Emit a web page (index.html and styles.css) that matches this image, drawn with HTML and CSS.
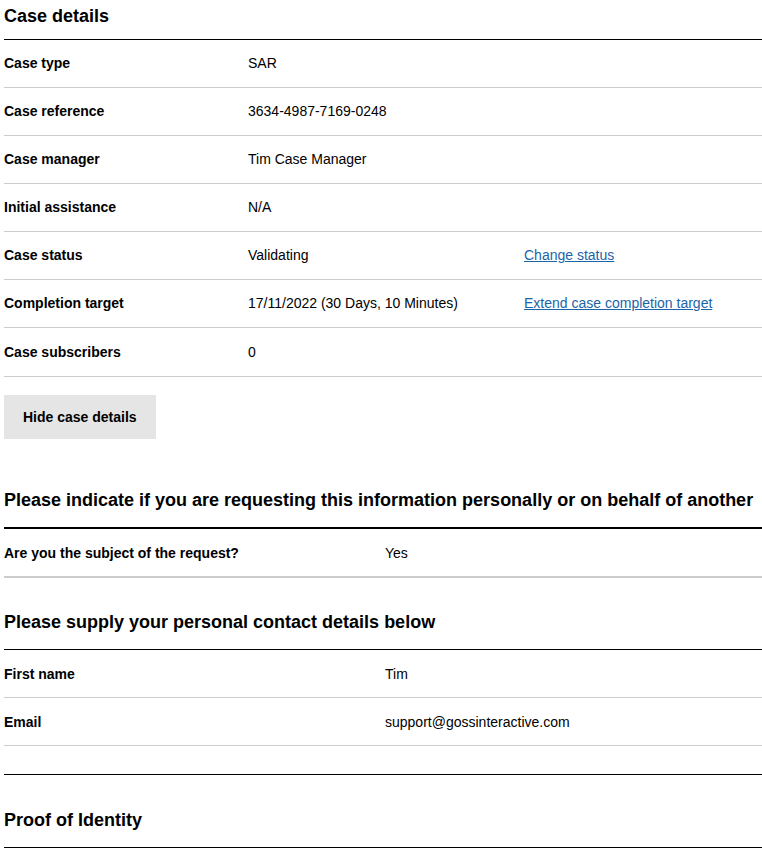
FILE: index.html
```html
<!DOCTYPE html>
<html lang="en">
<head>
<meta charset="utf-8">
<title>Case details</title>
<link rel="stylesheet" href="styles.css">
</head>
<body>
<main class="page">
  <section class="case">
    <h2 class="heading heading-first">Case details</h2>
    <div class="case-list">
      <div class="case-row"><div class="label">Case type</div><div class="value">SAR</div><div class="action"></div></div>
      <div class="case-row"><div class="label">Case reference</div><div class="value">3634-4987-7169-0248</div><div class="action"></div></div>
      <div class="case-row"><div class="label">Case manager</div><div class="value">Tim Case Manager</div><div class="action"></div></div>
      <div class="case-row"><div class="label">Initial assistance</div><div class="value">N/A</div><div class="action"></div></div>
      <div class="case-row"><div class="label">Case status</div><div class="value">Validating</div><div class="action"><a href="#" class="link">Change status</a></div></div>
      <div class="case-row"><div class="label">Completion target</div><div class="value">17/11/2022 (30 Days, 10 Minutes)</div><div class="action"><a href="#" class="link">Extend case completion target</a></div></div>
      <div class="case-row case-row-last"><div class="label">Case subscribers</div><div class="value">0</div><div class="action"></div></div>
    </div>
    <button class="btn" type="button">Hide case details</button>
  </section>

  <section class="summary summary-indicate">
    <h2 class="heading heading-thick">Please indicate if you are requesting this information personally or on behalf of another</h2>
    <div class="summary-row summary-row-thick"><div class="label">Are you the subject of the request?</div><div class="value">Yes</div></div>
  </section>

  <section class="summary summary-contact">
    <h2 class="heading">Please supply your personal contact details below</h2>
    <div class="summary-row"><div class="label">First name</div><div class="value">Tim</div></div>
    <div class="summary-row"><div class="label">Email</div><div class="value">support@gossinteractive.com</div></div>
  </section>

  <div class="divider"></div>

  <section class="summary summary-proof">
    <h2 class="heading">Proof of Identity</h2>
  </section>
</main>
</body>
</html>
```

FILE: styles.css
```css
* { box-sizing: border-box; }

html, body {
  margin: 0;
  padding: 0;
  background: #fff;
}

body {
  font-family: "Liberation Sans", Arial, sans-serif;
  color: #000;
  font-size: 14px;
  line-height: 16px;
}

.page {
  padding-left: 4px;
  overflow: hidden;
}

.heading {
  margin: 0;
  font-size: 18px;
  line-height: 22px;
  font-weight: bold;
  padding-bottom: 16px;
  border-bottom: 1px solid #000;
}

.heading-first {
  margin-top: 5px;
  padding-bottom: 12px;
}

.heading-thick {
  border-bottom-width: 2px;
}

.case-row {
  display: grid;
  grid-template-columns: 244px 276px 1fr;
  padding: 15px 0 16px;
  border-bottom: 1px solid #cccccc;
}

.case-row-last {
  padding-top: 16px;
}

.label {
  font-weight: bold;
}

.link {
  color: #1b64a8;
  text-decoration: underline;
}

.btn {
  display: block;
  margin-top: 18px;
  height: 44px;
  padding: 0 19px;
  border: 0;
  border-radius: 0;
  background: #e5e5e5;
  color: #000;
  font-family: "Liberation Sans", Arial, sans-serif;
  font-size: 14px;
  font-weight: bold;
  line-height: 16px;
  cursor: pointer;
}

.summary-indicate {
  margin-top: 50px;
}

.summary-contact {
  margin-top: 33px;
}

.summary-proof {
  margin-top: 34px;
}

.summary-row {
  display: grid;
  grid-template-columns: 381px 1fr;
  padding: 16px 0 15px;
  border-bottom: 1px solid #cccccc;
}

.summary-row-thick {
  border-bottom-width: 2px;
}

.divider {
  margin-top: 28px;
  border-top: 1px solid #000;
}
```
